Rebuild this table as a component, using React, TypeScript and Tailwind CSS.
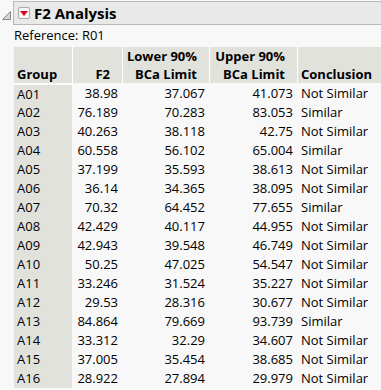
const rows: [string, string, string, string, string][] = [
  ["A01", "38.98", "37.067", "41.073", "Not Similar"],
  ["A02", "76.189", "70.283", "83.053", "Similar"],
  ["A03", "40.263", "38.118", "42.75", "Not Similar"],
  ["A04", "60.558", "56.102", "65.004", "Similar"],
  ["A05", "37.199", "35.593", "38.613", "Not Similar"],
  ["A06", "36.14", "34.365", "38.095", "Not Similar"],
  ["A07", "70.32", "64.452", "77.655", "Similar"],
  ["A08", "42.429", "40.117", "44.955", "Not Similar"],
  ["A09", "42.943", "39.548", "46.749", "Not Similar"],
  ["A10", "50.25", "47.025", "54.547", "Not Similar"],
  ["A11", "33.246", "31.524", "35.227", "Not Similar"],
  ["A12", "29.53", "28.316", "30.677", "Not Similar"],
  ["A13", "84.864", "79.669", "93.739", "Similar"],
  ["A14", "33.312", "32.29", "34.607", "Not Similar"],
  ["A15", "37.005", "35.454", "38.685", "Not Similar"],
  ["A16", "28.922", "27.894", "29.979", "Not Similar"],
];

export default function App() {
  return (
    <div
      className="w-[381px] h-[390px] overflow-hidden bg-[#f8f8f8] text-black"
      style={{ fontFamily: "'Open Sans', 'Noto Sans', sans-serif" }}
    >
      {/* outline header */}
      <div className="flex items-start pt-px">
        <div className="w-[13px] h-[23px] flex items-center justify-center">
          <svg width="9" height="9" viewBox="0 0 9 9" className="mt-[5px]">
            <path d="M0.5 8.5 L8.5 0.5 L8.5 8.5 Z" fill="#d4d4d4" stroke="#8a8a8a" strokeWidth="1" />
          </svg>
        </div>
        <div className="flex-1 h-[24px] mr-[-4px] flex items-center gap-[4px] pl-[4px] border border-[#b8b8b8] bg-[#e9e9e9]">
          <div className="w-[12px] h-[12px] rounded-[2px] border border-[#a9a9a9] bg-[#f4f4f4] flex items-center justify-center">
            <svg width="8" height="5" viewBox="0 0 8 5">
              <path d="M0 0 L8 0 L4 5 Z" fill="#d8001f" />
            </svg>
          </div>
          <span className="text-[15px] font-bold leading-none">F2 Analysis</span>
        </div>
      </div>

      <div className="pl-[14px]">
        <div className="h-[22px] flex items-center text-[13px]">Reference: R01</div>

        <div className="text-[13px]">
          <div className="flex h-[36px] bg-[#e2e2dd] font-bold leading-[18px]">
            <div className="w-[59px] border-r border-white flex items-end pl-[3px]">Group</div>
            <div className="w-[50px] border-r border-white flex items-end justify-end pr-[12px]">F2</div>
            <div className="w-[87px] border-r border-white flex flex-col items-end justify-end pr-[12px]">
              <span>Lower 90%</span>
              <span>BCa Limit</span>
            </div>
            <div className="w-[88px] border-r border-white flex flex-col items-end justify-end pr-[12px]">
              <span>Upper 90%</span>
              <span>BCa Limit</span>
            </div>
            <div className="flex-1 flex items-end pl-[3px]">Conclusion</div>
          </div>

          <div className="flex flex-col border-t border-[#f8f8f8]">
            {rows.map(([g, f2, lo, hi, c], i) => (
              <div key={g} className="flex h-[19px] items-center leading-[19px]">
                <div className={`w-[58px] h-full bg-[#e2e2dd] pl-[3px] ${i === 0 ? "border-t border-white" : ""}`}>{g}</div>
                <div className="w-[51px] text-right pr-[5px]">{f2}</div>
                <div className="w-[87px] text-right pr-[5px]">{lo}</div>
                <div className="w-[88px] text-right pr-[5px]">{hi}</div>
                <div className="flex-1 pl-[3px]">{c}</div>
              </div>
            ))}
          </div>
        </div>
      </div>
    </div>
  );
}
